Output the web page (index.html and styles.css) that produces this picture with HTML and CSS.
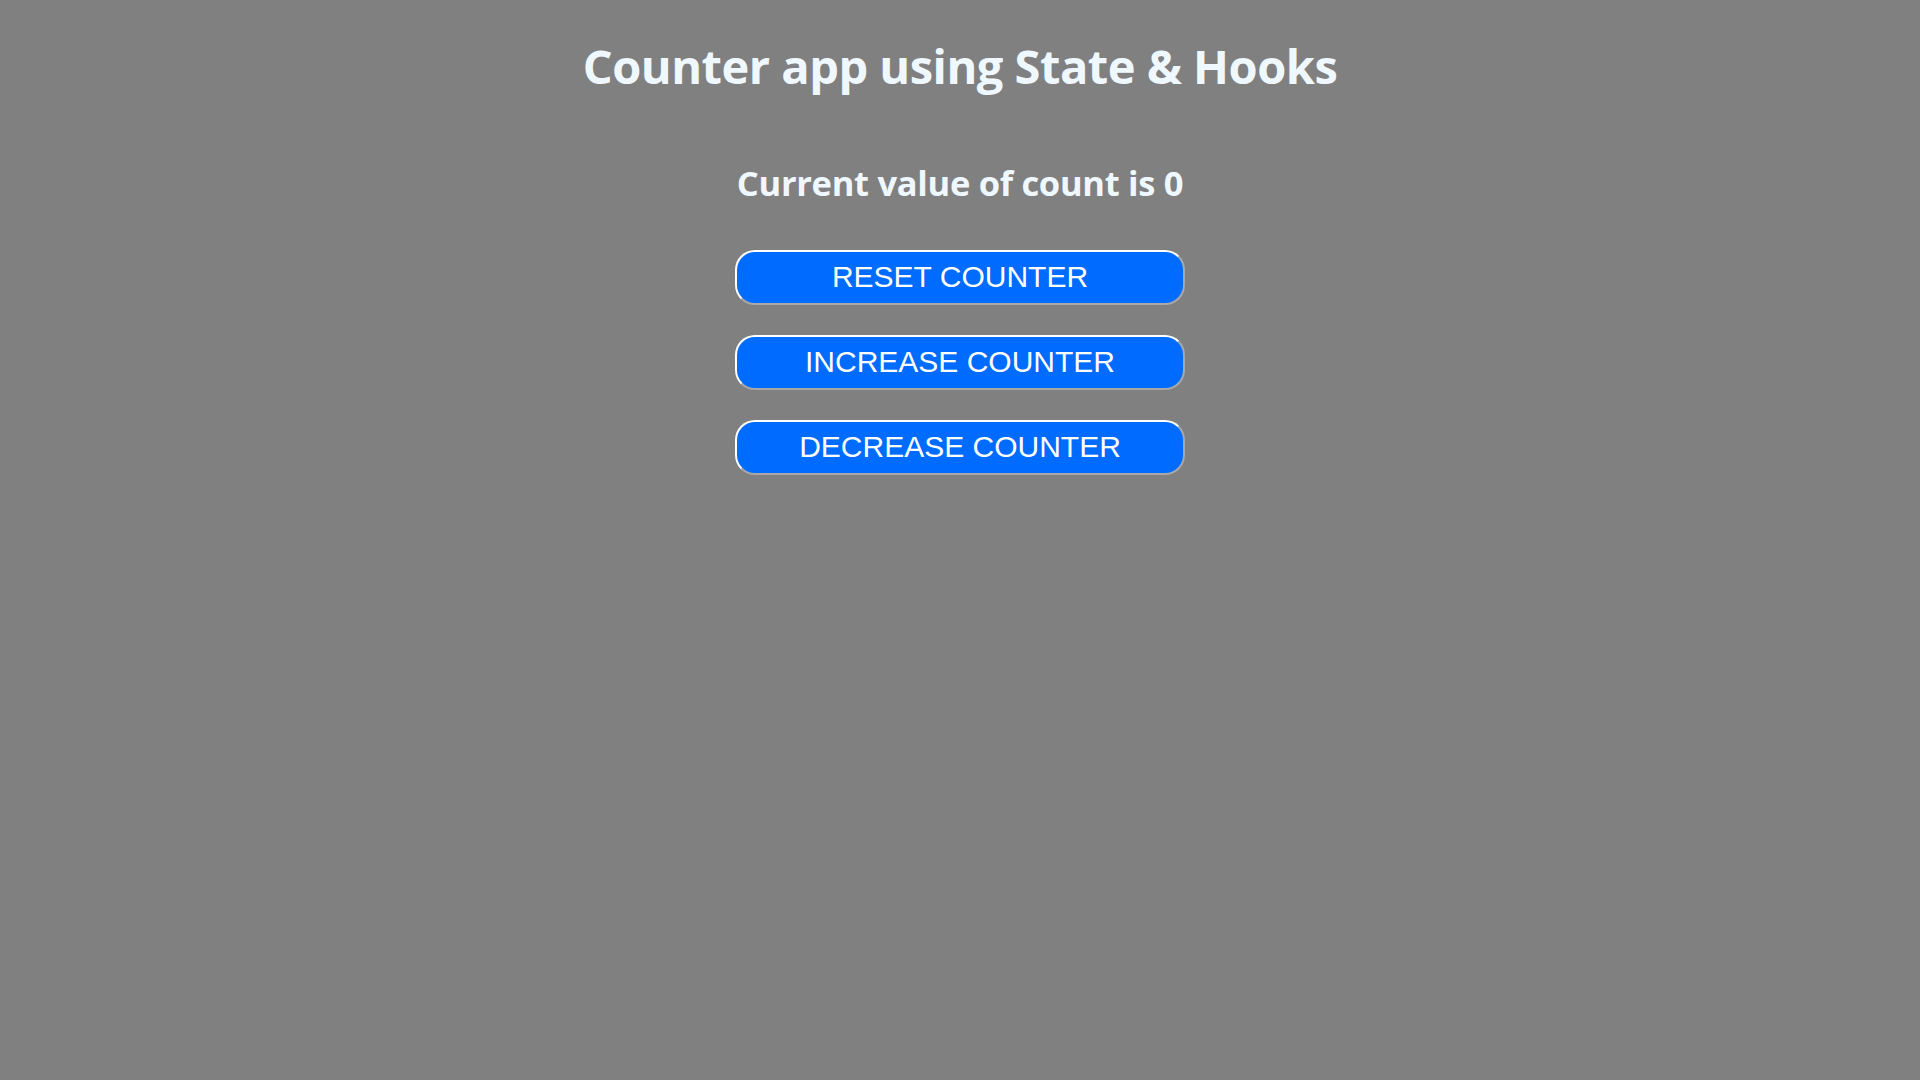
FILE: index.html
```html
<!DOCTYPE html>
<html lang="en">
<head>
<meta charset="utf-8">
<title>Counter app</title>
<link rel="stylesheet" href="styles.css">
</head>
<body>
<main class="app">
  <h1 class="title">Counter app using State &amp; Hooks</h1>
  <h2 class="value">Current value of count is 0</h2>
  <div class="actions">
    <button class="btn">RESET COUNTER</button>
    <button class="btn">INCREASE COUNTER</button>
    <button class="btn">DECREASE COUNTER</button>
  </div>
</main>
</body>
</html>
```
FILE: styles.css
```css
html, body {
  margin: 0;
  padding: 0;
  background: #808080;
  height: 100%;
}
.app {
  display: flex;
  flex-direction: column;
  align-items: center;
  font-family: "Open Sans", "Noto Sans", sans-serif;
  color: #f0f8ff;
  padding-top: 36px;
}
.title {
  margin: 0;
  font-size: 47px;
  font-weight: 700;
  line-height: 1.3;
  letter-spacing: -0.5px;
}
.value {
  margin: 64px 0 0;
  font-size: 34.5px;
  font-weight: 700;
  line-height: 1.3;
  letter-spacing: -0.3px;
}
.actions {
  display: flex;
  flex-direction: column;
  gap: 30px;
  margin-top: 44px;
}
.btn {
  width: 450px;
  height: 55px;
  box-sizing: border-box;
  background: #006bff;
  color: #ffffff;
  font-family: "Liberation Sans", Arial, sans-serif;
  font-size: 30px;
  border: 2px solid;
  border-color: #ffffff #a8a8a8 #a8a8a8 #ffffff;
  border-radius: 20px;
  padding: 0;
  cursor: pointer;
}
```
